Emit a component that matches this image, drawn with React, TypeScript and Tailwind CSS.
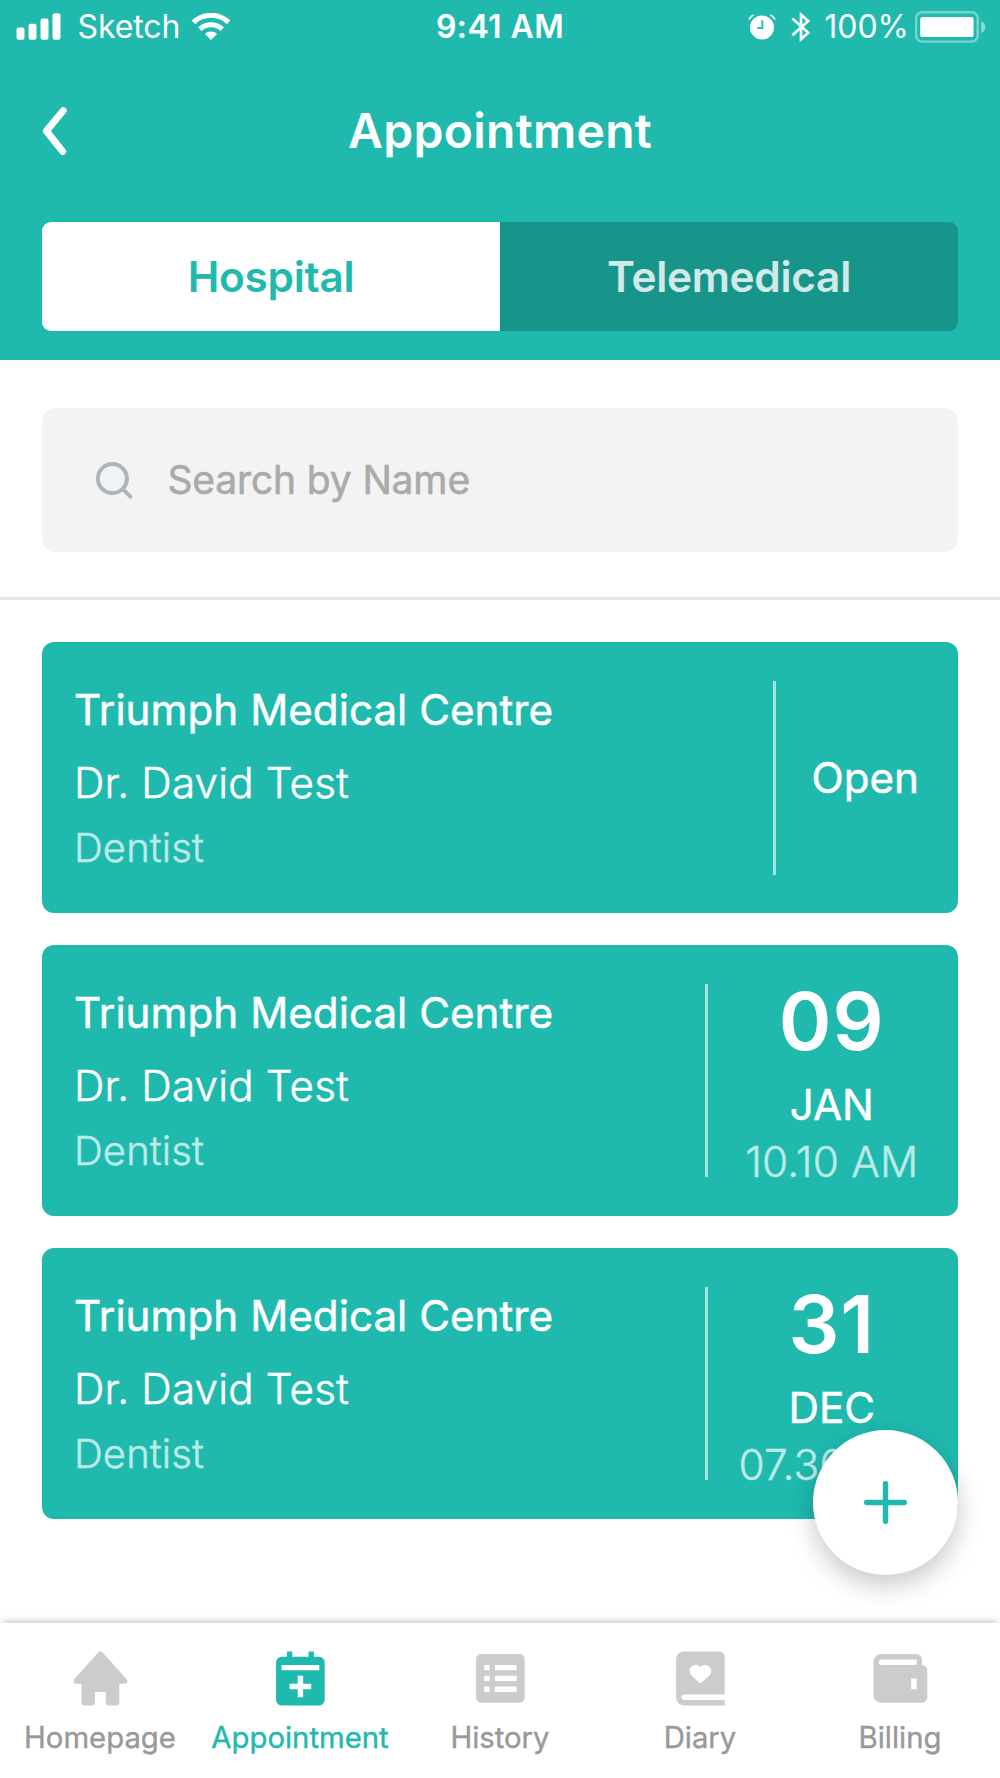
import React from 'react';

interface Appointment {
  id: number;
  hospital: string;
  doctor: string;
  specialty: string;
  day?: string;
  month?: string;
  time?: string;
}

const appointments: Appointment[] = [
  { id: 1, hospital: 'Triumph Medical Centre', doctor: 'Dr. David Test', specialty: 'Dentist' },
  {
    id: 2,
    hospital: 'Triumph Medical Centre',
    doctor: 'Dr. David Test',
    specialty: 'Dentist',
    day: '09',
    month: 'JAN',
    time: '10.10 AM',
  },
  {
    id: 3,
    hospital: 'Triumph Medical Centre',
    doctor: 'Dr. David Test',
    specialty: 'Dentist',
    day: '31',
    month: 'DEC',
    time: '07.30 AM',
  },
];

const SignalIcon = () => (
  <svg width="45" height="27" viewBox="0 0 45 27" fill="currentColor" aria-hidden="true">
    <rect x="0.5" y="14.5" width="8" height="12.3" rx="2.2" />
    <rect x="12.5" y="10.7" width="8" height="16.1" rx="2.2" />
    <rect x="24.5" y="5.5" width="8" height="21.3" rx="2.2" />
    <rect x="36.5" y="0.2" width="8" height="26.6" rx="2.2" />
  </svg>
);

const WifiIcon = () => (
  <svg width="40" height="28" viewBox="0 0 40 28" aria-hidden="true">
    <g fill="none" stroke="currentColor" strokeWidth="5">
      <path d="M2.4 9.4A25.4 25.4 0 0 1 37.6 9.4" />
      <path d="M8.8 16.1A16.4 16.4 0 0 1 31.2 16.1" />
    </g>
    <path d="M20 27L13.9 20.9A8.7 8.7 0 0 1 26.1 20.9Z" fill="currentColor" />
  </svg>
);

const AlarmIcon = () => (
  <svg width="28" height="26" viewBox="0 0 28 26" fill="none" aria-hidden="true">
    <circle cx="14" cy="13.6" r="12" fill="currentColor" />
    <path
      d="M1 5.9A5 5 0 0 1 6 1Q3 2.8 1 5.9ZM27 5.9A5 5 0 0 0 22 1Q25 2.8 27 5.9Z"
      fill="currentColor"
      stroke="currentColor"
      strokeWidth="0.8"
    />
    <path d="M14.3 6.3V14.1H9.2" className="stroke-[#1fb9ae]" strokeWidth="1.8" />
  </svg>
);

const BluetoothIcon = () => (
  <svg width="20" height="32" viewBox="0 0 20 32" fill="none" stroke="currentColor" strokeWidth="2.6" aria-hidden="true">
    <path d="M1.3 7.4L17.2 21.8L10 28.3V3.7L17.2 9.9L1.3 24.2" />
  </svg>
);

const BatteryIcon = () => (
  <svg width="72" height="32" viewBox="0 0 72 32" fill="none" aria-hidden="true">
    <rect x="1.1" y="1.3" width="61.6" height="29.3" rx="6" stroke="currentColor" strokeOpacity="0.4" strokeWidth="2.4" />
    <rect x="5.2" y="6" width="53.4" height="20" rx="2.6" fill="currentColor" />
    <path d="M66.2 10.2C71.7 12.3 71.7 19.9 66.2 22Z" fill="currentColor" fillOpacity="0.5" />
  </svg>
);

const StatusBar = () => (
  <div className="grid h-[53px] grid-cols-3 items-center px-[15.5px] text-[32px] leading-none">
    <div className="flex items-center">
      <SignalIcon />
      <span className="ml-[17px] tracking-[-0.1px]">Sketch</span>
      <span className="ml-[11px]">
        <WifiIcon />
      </span>
    </div>
    <div className="text-center font-semibold tracking-[0.4px]">9:41 AM</div>
    <div className="flex items-center justify-end">
      <AlarmIcon />
      <span className="ml-[15px]">
        <BluetoothIcon />
      </span>
      <span className="mt-[1px] ml-[13px]">100%</span>
      <span className="ml-[5.5px] -mr-[2px]">
        <BatteryIcon />
      </span>
    </div>
  </div>
);

const Header = () => (
  <header className="h-[360px] bg-[#1fb9ae] text-white">
    <StatusBar />
    <div className="grid h-[169px] grid-cols-[100px_1fr_100px] items-center px-[42px] pb-[13px]">
      <button type="button" aria-label="Back">
        <svg width="26" height="50" viewBox="0 0 26 50" fill="none" aria-hidden="true">
          <path d="M21.2 4.6L4.4 25L20.6 45.4" stroke="currentColor" strokeWidth="7" strokeLinecap="round" strokeLinejoin="round" />
        </svg>
      </button>
      <h1 className="text-center text-5xl font-semibold tracking-[0.3px]">Appointment</h1>
    </div>
    <div className="mx-[42px] grid h-[109px] grid-cols-2 overflow-hidden rounded-[9px] text-[42.4px] font-semibold tracking-[-0.3px]">
      <button type="button" className="bg-white text-[#1fb9ae]">
        Hospital
      </button>
      <button type="button" className="bg-[#18958a] text-[#d1eae8]">
        Telemedical
      </button>
    </div>
  </header>
);

const SearchBar = () => (
  <div className="border-b-[3px] border-[#e6e6e6] px-[42px] pt-[48.4px] pb-[45.2px]">
    <div className="flex h-[143.4px] items-center rounded-[13px] bg-[#f3f3f3] pl-[52px]">
      <svg width="41" height="41" viewBox="0 0 41 41" fill="none" stroke="#adb5bb" strokeWidth="4" strokeLinecap="round" aria-hidden="true">
        <circle cx="18.4" cy="18.6" r="14.5" />
        <path d="M29.2 29.4L36.4 36.6" />
      </svg>
      <span className="mt-[1px] ml-[32.5px] text-[39px] tracking-[-0.15px] text-[#aaaaaa] [-webkit-text-stroke:0.6px]">Search by Name</span>
    </div>
  </div>
);

const AppointmentCard: React.FC<{ item: Appointment }> = ({ item }) => (
  <div className="flex h-[270.6px] rounded-xl bg-[#1fb9ae] text-[42.2px] text-white [-webkit-text-stroke:0.5px]">
    <div className="flex-1 pt-[30.5px] pl-[32px]">
      <div className="leading-[73px]">{item.hospital}</div>
      <div className="leading-[73px] font-light tracking-[0.18px]">{item.doctor}</div>
      <div className="text-[40px] leading-[57.6px] font-light tracking-[0.1px] text-[#bceae7]">{item.specialty}</div>
    </div>
    <div className="my-[38.5px] w-[3px] bg-white/60" />
    {item.day ? (
      <div className="w-[250px] pt-[20.8px] pr-[2.5px] text-center">
        <div className="text-[80px] leading-[110px] font-semibold tracking-[1px] [-webkit-text-stroke:0]">{item.day}</div>
        <div className="leading-[57px]">{item.month}</div>
        <div className="text-[42.4px] leading-[57px] font-light tracking-[0.2px] text-[#bceae7]">{item.time}</div>
      </div>
    ) : (
      <div className="flex w-[182px] items-center justify-center pr-[3.5px]">Open</div>
    )}
  </div>
);

const HomeIcon = () => (
  <path d="m12.74 2.32a1 1 0 0 0-1.48 0l-9 10A1 1 0 0 0 3 14h2v7a1 1 0 0 0 1 1h3a1 1 0 0 0 1-1v-4h4v4a1 1 0 0 0 1 1h3a1 1 0 0 0 1-1v-7h2a1 1 0 0 0 1-1 1 1 0 0 0-.26-.68z" />
);

const CalendarIcon = () => (
  <path
    fillRule="evenodd"
    d="M19 4h-2V2h-2v2H9V2H7v2H5a2 2 0 0 0-2 2v14a2 2 0 0 0 2 2h14a2 2 0 0 0 2-2V6a2 2 0 0 0-2-2zM16 16h-3v3h-2v-3H8v-2h3v-3h2v3h3zM19 9H5V7h14z"
  />
);

const ListIcon = () => (
  <path
    fillRule="evenodd"
    d="M19.2 3H4.8A1.8 1.8 0 0 0 3 4.8v14.4A1.8 1.8 0 0 0 4.8 21h14.4a1.8 1.8 0 0 0 1.8-1.8V4.8A1.8 1.8 0 0 0 19.2 3zM8 17H6v-2h2zM8 13H6v-2h2zM8 9H6V7h2zM18 17h-8v-2h8zM18 13h-8v-2h8zM18 9h-8V7h8z"
  />
);

const DiaryIcon = () => (
  <path
    fillRule="evenodd"
    d="M6.01 22H21v-2H6.01C5.55 19.99 5 19.8 5 19s.55-.99 1.01-1H21V4a2 2 0 0 0-2-2H6C4.79 2 3 2.8 3 5v14c0 2.2 1.79 3 3.01 3zM8.65 7.65a2.31 2.31 0 0 1 3.29 0l.06.06.06-.06a2.31 2.31 0 0 1 3.29 0 2.36 2.36 0 0 1 0 3.29L12 13.9l-3.35-2.96a2.36 2.36 0 0 1 0-3.29z"
  />
);

const WalletIcon = () => (
  <path
    fillRule="evenodd"
    d="M20 7V5a2 2 0 0 0-2-2H5a3 3 0 0 0-3 3v12c0 2.2 1.79 3 3 3h15a2 2 0 0 0 2-2V9a2 2 0 0 0-2-2zM18 16h-2v-4h2zM5 7a1 1 0 0 1 0-2h13v2z"
  />
);

const navItems = [
  { label: 'Homepage', icon: <HomeIcon />, active: false },
  { label: 'Appointment', icon: <CalendarIcon />, active: true },
  { label: 'History', icon: <ListIcon />, active: false },
  { label: 'Diary', icon: <DiaryIcon />, active: false },
  { label: 'Billing', icon: <WalletIcon />, active: false },
];

const BottomNav = () => (
  <nav className="grid h-[155px] grid-cols-5 bg-white shadow-[0_-4px_7px_-3px_rgba(0,0,0,0.28)]">
    {navItems.map(({ label, icon, active }) => (
      <button
        key={label}
        type="button"
        className={`flex flex-col items-center pt-[22.6px] ${active ? 'text-[#1fb9ae]' : 'text-[#cccccc]'}`}
      >
        <svg width="64.8" height="64.8" viewBox="0 0 24 24" fill="currentColor" aria-hidden="true">
          {icon}
        </svg>
        <span
          className={`mt-[8px] text-[29.3px] leading-[40px] [-webkit-text-stroke:0.4px] ${active ? '' : 'text-[#999999]'}`}
        >
          {label}
        </span>
      </button>
    ))}
  </nav>
);

export default function App() {
  return (
    <div className="relative flex h-[1778px] w-[1000px] flex-col overflow-hidden bg-white font-['Inter',sans-serif]">
      <Header />
      <SearchBar />
      <main className="flex flex-1 flex-col gap-[32.2px] px-[42px] pt-[42.5px]">
        {appointments.map((item) => (
          <AppointmentCard key={item.id} item={item} />
        ))}
      </main>
      <BottomNav />
      <button
        type="button"
        aria-label="Add appointment"
        className="absolute right-[42px] bottom-[203px] flex size-[145px] items-center justify-center rounded-full bg-white text-[#1fb9ae] shadow-[0_10px_26px_rgba(0,0,0,0.22)]"
      >
        <svg width="45" height="45" viewBox="0 0 45 45" stroke="currentColor" strokeWidth="5.4" strokeLinecap="round" aria-hidden="true">
          <path d="M22.5 3.7V41.3M3.7 22.5H41.3" />
        </svg>
      </button>
    </div>
  );
}
